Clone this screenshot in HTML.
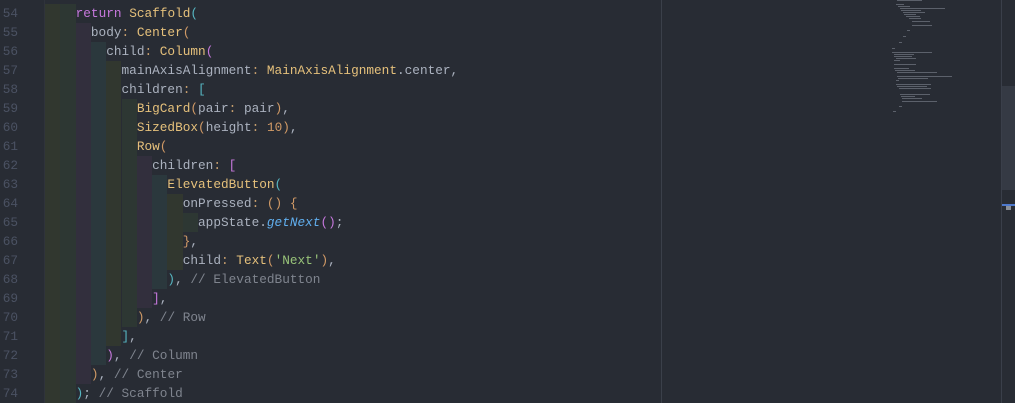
<!DOCTYPE html>
<html><head><meta charset="utf-8"><style>
html,body{margin:0;padding:0;width:1015px;height:403px;overflow:hidden;background:#282c34}
#code{position:absolute;left:45px;top:3.5px;font-family:"Liberation Mono",monospace;font-size:12.75px;line-height:19px;color:#abb2bf;white-space:pre}
.l{height:19px}
.ln{position:absolute;left:0;width:18px;text-align:right;font-family:"Liberation Mono",monospace;font-size:12.75px;line-height:19px;color:#4b5263}
.bd{position:absolute;height:19px;width:15.3px}
.b0{background:#31372f}.b1{background:#2d3733}.b2{background:#322f3d}.b3{background:#2b383d}
.k{color:#c678dd}.c{color:#e5c07b}.p{color:#c8a06e}.n{color:#d19a66}.f{color:#61afef;font-style:italic}.s{color:#98c379}.cm{color:#7f848e}
.y{color:#56b6c2}.o{color:#d19a66}.v{color:#c678dd}
.mm{position:absolute;height:1px;background:#5c616b}
</style></head><body>
<div style="position:absolute;left:44px;top:0;width:1px;height:403px;background:#2f333b"></div>
<div style="position:absolute;left:661px;top:0;width:1px;height:403px;background:#3b404a"></div>
<div style="position:absolute;left:1001px;top:0;width:1px;height:403px;background:#3a3f4a"></div>
<div style="position:absolute;left:1002px;top:86px;width:13px;height:104px;background:#353a44"></div>
<div style="position:absolute;left:1002px;top:204px;width:13px;height:2px;background:#4d78cc"></div>
<div style="position:absolute;left:1006px;top:206px;width:5px;height:4px;background:#8a8f98"></div>
<div id="bands"></div>
<div id="nums"></div>
<div id="mini"></div>
<div id="code"></div>
<script>
var L=[
[4,'<span class="k">return</span> <span class="c">Scaffold</span><span class="y">(</span>'],
[6,'body<span class="p">:</span> <span class="c">Center</span><span class="o">(</span>'],
[8,'child<span class="p">:</span> <span class="c">Column</span><span class="v">(</span>'],
[10,'mainAxisAlignment<span class="p">:</span> <span class="c">MainAxisAlignment</span>.center,'],
[10,'children<span class="p">:</span> <span class="y">[</span>'],
[12,'<span class="c">BigCard</span><span class="o">(</span>pair<span class="p">:</span> pair<span class="o">)</span>,'],
[12,'<span class="c">SizedBox</span><span class="o">(</span>height<span class="p">:</span> <span class="n">10</span><span class="o">)</span>,'],
[12,'<span class="c">Row</span><span class="o">(</span>'],
[14,'children<span class="p">:</span> <span class="v">[</span>'],
[16,'<span class="c">ElevatedButton</span><span class="y">(</span>'],
[18,'onPressed<span class="p">:</span> <span class="o">()</span> <span class="o">{</span>'],
[20,'appState.<span class="f">getNext</span><span class="v">()</span>;'],
[18,'<span class="o">}</span>,'],
[18,'child<span class="p">:</span> <span class="c">Text</span><span class="o">(</span><span class="s">\'Next\'</span><span class="o">)</span>,'],
[16,'<span class="y">)</span>, <span class="cm">// ElevatedButton</span>'],
[14,'<span class="v">]</span>,'],
[12,'<span class="o">)</span>, <span class="cm">// Row</span>'],
[10,'<span class="y">]</span>,'],
[8,'<span class="v">)</span>, <span class="cm">// Column</span>'],
[6,'<span class="o">)</span>, <span class="cm">// Center</span>'],
[4,'<span class="y">)</span>; <span class="cm">// Scaffold</span>']];
var h='',nh='',bh='';
L.forEach(function(x,i){
var top=3.5+i*19;
for(var j=0;j<x[0]/2;j++)bh+='<div class="bd b'+(j%4)+'" style="left:'+(45+j*15.3)+'px;top:'+top+'px"></div>';
h+='<div class="l">'+Array(x[0]+1).join(' ')+x[1]+'</div>';
nh+='<div class="ln" style="top:'+top+'px">'+(54+i)+'</div>';});
document.getElementById('code').innerHTML=h;document.getElementById('nums').innerHTML=nh;document.getElementById('bands').innerHTML=bh;
var M=[[897,0,25],[896,4,8],[898,6,12],[900,8,45],[901,10,20],[903,12,22],[904,14,12],[906,16,14],[909,18,12],[912,21,18],[912,25,20],[907,30,3],[903,36,3],[899,42,3],[892,48,3],[892,52,40],[894,54,20],[894,56,18],[896,58,20],[894,60,6],[894,64,22],[894,68,15],[895,70,20],[897,72,40],[897,76,55],[898,78,30],[896,80,3],[896,84,35],[897,86,30],[899,88,32],[900,94,30],[901,96,14],[902,98,20],[902,101,35],[899,106,3],[893,111,3]];
var mh='';M.forEach(function(m){mh+='<div class="mm" style="left:'+m[0]+'px;top:'+m[1]+'px;width:'+m[2]+'px"></div>';});
document.getElementById('mini').innerHTML=mh;
</script>
</body></html>
